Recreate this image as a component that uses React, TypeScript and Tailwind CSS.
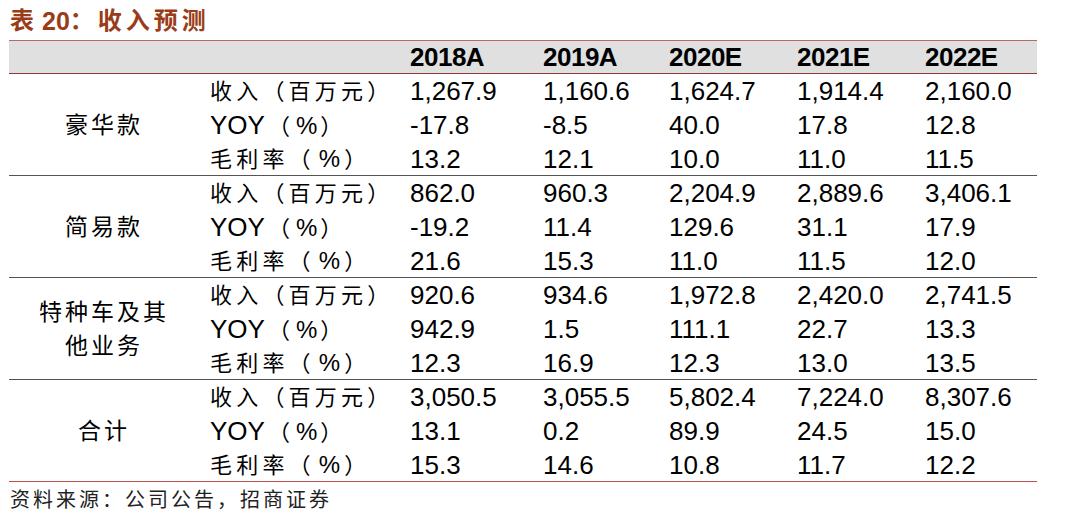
const FONT = '[font-family:"Liberation_Sans","Noto_Sans_CJK_SC",sans-serif]';

type Group = {
  name: string[];
  rows: { label: React.ReactNode; values: string[] }[];
};

const years = ['2018A', '2019A', '2020E', '2021E', '2022E'];

const rev = <span className="tracking-[4.2px]">收入（百万元）</span>;
const yoy = (
  <span>
    <span className="text-[26px]">YOY</span>
    <span className="tracking-[3px] ml-[3px]">（</span>
    <span className="text-[24px] ml-[3px] mr-[3px]">%</span>
    <span>）</span>
  </span>
);
const gm = (
  <span>
    <span className="tracking-[4.2px]">毛利率（</span>
    <span className="text-[24px] ml-[4px] mr-[4px]">%</span>
    <span>）</span>
  </span>
);

const groups: Group[] = [
  {
    name: ['豪华款'],
    rows: [
      { label: rev, values: ['1,267.9', '1,160.6', '1,624.7', '1,914.4', '2,160.0'] },
      { label: yoy, values: ['-17.8', '-8.5', '40.0', '17.8', '12.8'] },
      { label: gm, values: ['13.2', '12.1', '10.0', '11.0', '11.5'] },
    ],
  },
  {
    name: ['简易款'],
    rows: [
      { label: rev, values: ['862.0', '960.3', '2,204.9', '2,889.6', '3,406.1'] },
      { label: yoy, values: ['-19.2', '11.4', '129.6', '31.1', '17.9'] },
      { label: gm, values: ['21.6', '15.3', '11.0', '11.5', '12.0'] },
    ],
  },
  {
    name: ['特种车及其', '他业务'],
    rows: [
      { label: rev, values: ['920.6', '934.6', '1,972.8', '2,420.0', '2,741.5'] },
      { label: yoy, values: ['942.9', '1.5', '111.1', '22.7', '13.3'] },
      { label: gm, values: ['12.3', '16.9', '12.3', '13.0', '13.5'] },
    ],
  },
  {
    name: ['合计'],
    rows: [
      { label: rev, values: ['3,050.5', '3,055.5', '5,802.4', '7,224.0', '8,307.6'] },
      { label: yoy, values: ['13.1', '0.2', '89.9', '24.5', '15.0'] },
      { label: gm, values: ['15.3', '14.6', '10.8', '11.7', '12.2'] },
    ],
  },
];

const cols = 'grid grid-cols-[190px_211px_133px_126px_128px_128px_1fr]';

export default function App() {
  return (
    <div className={`w-[1080px] h-[519px] bg-white text-black ${FONT}`}>
      <div className="h-[40px] pl-[10px] flex items-center pt-[2px] text-[24px] font-bold text-[#9a3c17] leading-none">
        <span className="tracking-[2px]">表</span>
        <span className="ml-[6px] text-[25px]">20</span>
        <span className="tracking-[4px]">：收入预测</span>
      </div>

      <div className="ml-[9px] w-[1028px]">
        <div className={`${cols} h-[34px] bg-[#e0e0e0] border-t-[1.5px] border-b-[1.5px] border-t-[#b56c62] border-b-[#8e3a33] items-center`}>
          <div />
          <div />
          {years.map((y) => (
            <div key={y} className="text-[26px] font-bold leading-none tracking-[-0.5px]">
              {y}
            </div>
          ))}
        </div>

        {groups.map((g, gi) => (
          <div
            key={gi}
            className={`${cols} h-[102px] grid-rows-[34px_34px_1fr] ${
              gi === groups.length - 1 ? 'border-b border-b-[#c0504d]' : 'border-b-[1.5px] border-b-[#555]'
            }`}
          >
            <div className="row-span-3 flex flex-col items-center justify-center text-[23px] tracking-[3px] leading-[34px]">
              {g.name.map((n) => (
                <div key={n}>{n}</div>
              ))}
            </div>
            {g.rows.map((r, ri) => (
              <div key={ri} className="contents">
                <div className="pl-[11px] h-[34px] flex items-center text-[22px] whitespace-nowrap">
                  {r.label}
                </div>
                {r.values.map((v, vi) => (
                  <div key={vi} className="h-[34px] flex items-center text-[26px]">
                    {v}
                  </div>
                ))}
              </div>
            ))}
          </div>
        ))}
      </div>

      <div className="pl-[10px] pt-[3px] text-[20px] tracking-[3px] text-[#222] leading-[30px]">
        资料来源：公司公告，招商证券
      </div>
    </div>
  );
}
